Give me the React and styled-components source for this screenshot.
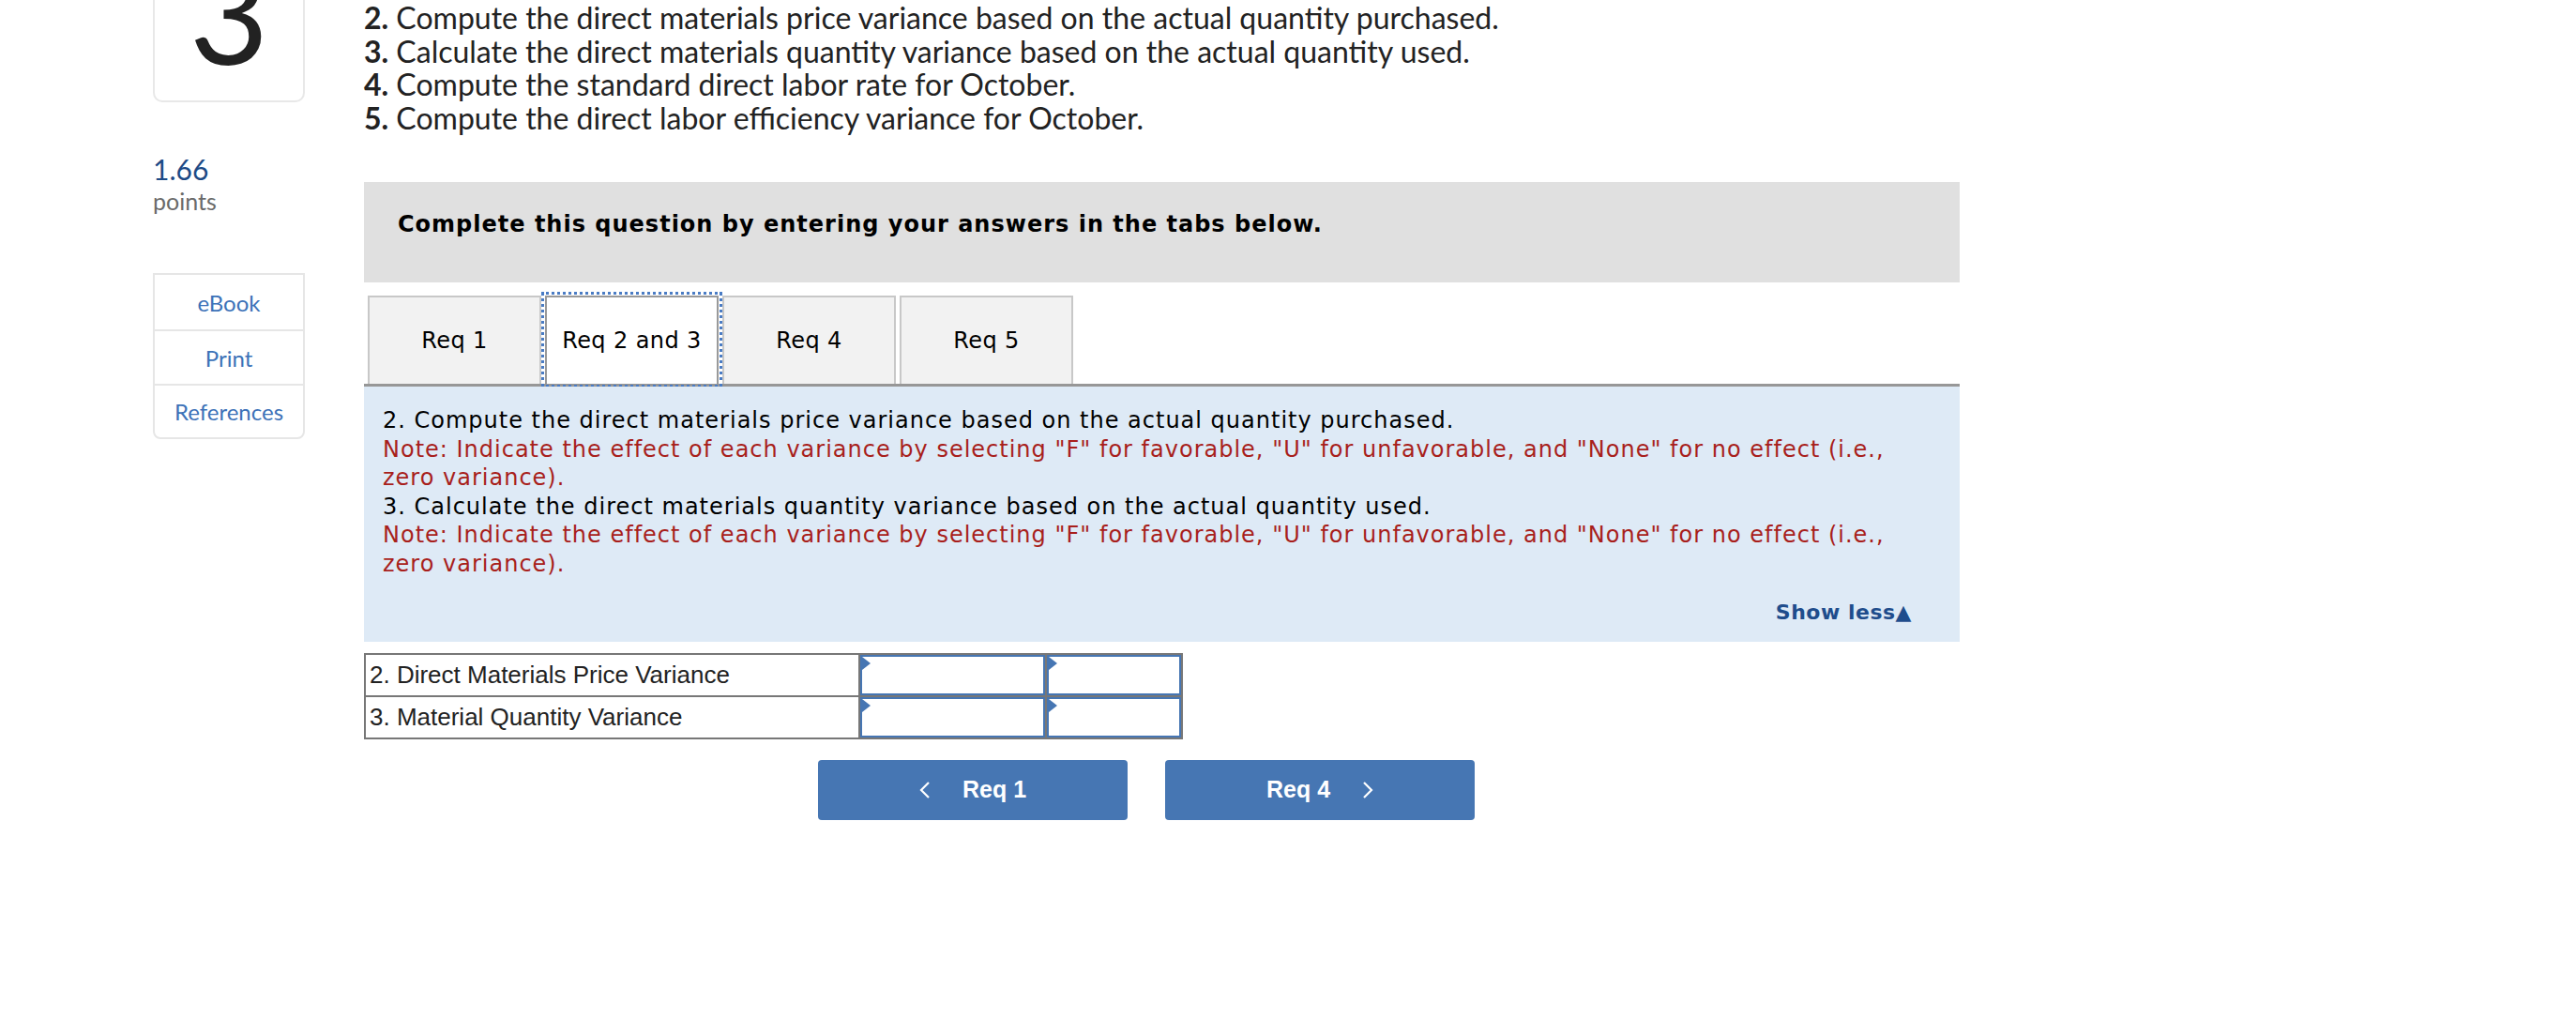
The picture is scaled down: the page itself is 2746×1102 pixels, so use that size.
import React from 'react';
import styled, { createGlobalStyle } from 'styled-components';

const GlobalStyle = createGlobalStyle`
  body {
    margin: 0;
    background: #fff;
    font-family: Lato, "Noto Sans", sans-serif;
  }
`;

const Page = styled.div`
  display: flex;
  gap: 63px;
  padding-left: 163px;
  overflow: hidden;
  height: 1102px;
`;

const Side = styled.div`
  width: 162px;
  display: flex;
  flex-direction: column;
`;

const NumberCard = styled.div`
  margin-top: -52px;
  height: 161px;
  box-sizing: border-box;
  border: 2px solid #e8e8e8;
  border-radius: 10px;
  display: flex;
  justify-content: center;
  align-items: flex-end;
  overflow: hidden;
`;

const BigNumber = styled.span`
  font-size: 146px;
  line-height: 1;
  color: #222;
  margin-bottom: 21px;
`;

const Points = styled.div`
  margin-top: 53px;
  font-size: 30px;
  line-height: 36px;
  color: #1d4a86;
`;

const PointsLabel = styled.div`
  margin-top: 1px;
  font-size: 25px;
  line-height: 30px;
  color: #6a6a6a;
`;

const LinkBox = styled.div`
  margin-top: 62px;
  border: 2px solid #e6e6e6;
  border-radius: 0 0 8px 8px;
  display: flex;
  flex-direction: column;
`;

const SideLink = styled.div`
  height: ${(p) => p.h}px;
  display: flex;
  align-items: center;
  justify-content: center;
  font-size: 24px;
  color: #3c72b8;
  & + & {
    border-top: 2px solid #e6e6e6;
  }
`;

const Main = styled.div`
  width: 1701px;
  display: flex;
  flex-direction: column;
  padding-top: 1px;
`;

const Steps = styled.div`
  font-size: 32px;
  line-height: 35.5px;
  color: #222;
  & b {
    font-weight: 700;
  }
`;

const Banner = styled.div`
  margin-top: 51px;
  height: 107px;
  box-sizing: border-box;
  background: #e0e0e0;
  padding: 30px 36px 0;
  font-family: "DejaVu Sans", Verdana, sans-serif;
  font-weight: 700;
  font-size: 24px;
  letter-spacing: 1px;
  line-height: 30px;
  color: #000;
`;

const TabBar = styled.div`
  margin-top: 14px;
  display: flex;
  gap: 4px;
  padding-left: 4px;
  border-bottom: 3px solid #979797;
`;

const Tab = styled.div`
  width: 185px;
  height: 94px;
  box-sizing: border-box;
  display: flex;
  align-items: center;
  justify-content: center;
  font-family: "DejaVu Sans", Verdana, sans-serif;
  font-size: 24px;
  letter-spacing: 0.4px;
  color: #000;
  background: ${(p) => (p.active ? '#fff' : '#f2f2f2')};
  border: 2px solid ${(p) => (p.active ? '#999' : '#c8c8c8')};
  border-bottom: none;
  outline: ${(p) => (p.active ? '3px dotted #4a7cc4' : 'none')};
  outline-offset: 1px;
`;

const InfoPanel = styled.div`
  background: #deeaf6;
  padding: 21px 51px 18px 20px;
  font-family: "DejaVu Sans", Verdana, sans-serif;
  font-size: 24px;
  letter-spacing: 1px;
  line-height: 30.6px;
  color: #000;
  display: flex;
  flex-direction: column;
`;

const Line = styled.div`
  color: ${(p) => (p.note ? '#a81f1c' : '#000')};
  padding-right: 10px;
`;

const ShowLess = styled.div`
  align-self: flex-end;
  margin-top: 22px;
  font-size: 22px;
  letter-spacing: 0.5px;
  line-height: 27px;
  font-weight: 700;
  color: #1f4d8c;
`;

const AnswerTable = styled.div`
  margin-top: 12px;
  display: grid;
  grid-template-columns: 525px 197px 143px;
  width: max-content;
  border: 2px solid #777;
  background: #777;
  gap: 2px;
`;

const LabelCell = styled.div`
  height: 43px;
  display: flex;
  align-items: center;
  padding-left: 4px;
  background: #fff;
  font-family: "Liberation Sans", Arial, sans-serif;
  font-size: 26px;
  color: #222;
`;

const InputCell = styled.div`
  position: relative;
  height: 43px;
  box-sizing: border-box;
  background: #fff;
  border: 2px solid #4676b3;
  &::before {
    content: '';
    position: absolute;
    left: 0;
    top: 0;
    border-left: 9px solid #4676b3;
    border-top: 7px solid transparent;
    border-bottom: 7px solid transparent;
  }
`;

const NavRow = styled.div`
  margin-top: 22px;
  padding-left: 484px;
  display: flex;
  gap: 40px;
`;

const NavButton = styled.div`
  width: 330px;
  height: 64px;
  border-radius: 4px;
  background: #4676b3;
  color: #fff;
  display: flex;
  align-items: center;
  justify-content: center;
  gap: 34px;
  font-family: "Liberation Sans", Arial, sans-serif;
  font-weight: 700;
  font-size: 25px;
`;

const Chevron = ({ dir }) => (
  <svg width="12" height="20" viewBox="0 0 12 20">
    <polyline
      points={dir === 'left' ? '10,2 2,10 10,18' : '2,2 10,10 2,18'}
      fill="none"
      stroke="#fff"
      strokeWidth="2.2"
    />
  </svg>
);

const noteText =
  'Note: Indicate the effect of each variance by selecting "F" for favorable, "U" for unfavorable, and "None" for no effect (i.e., zero variance).';

const rows = ['2. Direct Materials Price Variance', '3. Material Quantity Variance'];

export default function App() {
  return (
    <>
      <GlobalStyle />
      <Page>
        <Side>
          <NumberCard>
            <BigNumber>3</BigNumber>
          </NumberCard>
          <Points>1.66</Points>
          <PointsLabel>points</PointsLabel>
          <LinkBox>
            <SideLink h={58}>eBook</SideLink>
            <SideLink h={56}>Print</SideLink>
            <SideLink h={55}>References</SideLink>
          </LinkBox>
        </Side>
        <Main>
          <Steps>
            <div><b>2.</b> Compute the direct materials price variance based on the actual quantity purchased.</div>
            <div><b>3.</b> Calculate the direct materials quantity variance based on the actual quantity used.</div>
            <div><b>4.</b> Compute the standard direct labor rate for October.</div>
            <div><b>5.</b> Compute the direct labor efficiency variance for October.</div>
          </Steps>
          <Banner>Complete this question by entering your answers in the tabs below.</Banner>
          <TabBar>
            <Tab>Req 1</Tab>
            <Tab active>Req 2 and 3</Tab>
            <Tab>Req 4</Tab>
            <Tab>Req 5</Tab>
          </TabBar>
          <InfoPanel>
            <Line>2. Compute the direct materials price variance based on the actual quantity purchased.</Line>
            <Line note>{noteText}</Line>
            <Line>3. Calculate the direct materials quantity variance based on the actual quantity used.</Line>
            <Line note>{noteText}</Line>
            <ShowLess>Show less▲</ShowLess>
          </InfoPanel>
          <AnswerTable>
            {rows.map((r) => (
              <React.Fragment key={r}>
                <LabelCell>{r}</LabelCell>
                <InputCell />
                <InputCell />
              </React.Fragment>
            ))}
          </AnswerTable>
          <NavRow>
            <NavButton>
              <Chevron dir="left" />
              Req 1
            </NavButton>
            <NavButton>
              Req 4
              <Chevron dir="right" />
            </NavButton>
          </NavRow>
        </Main>
      </Page>
    </>
  );
}
